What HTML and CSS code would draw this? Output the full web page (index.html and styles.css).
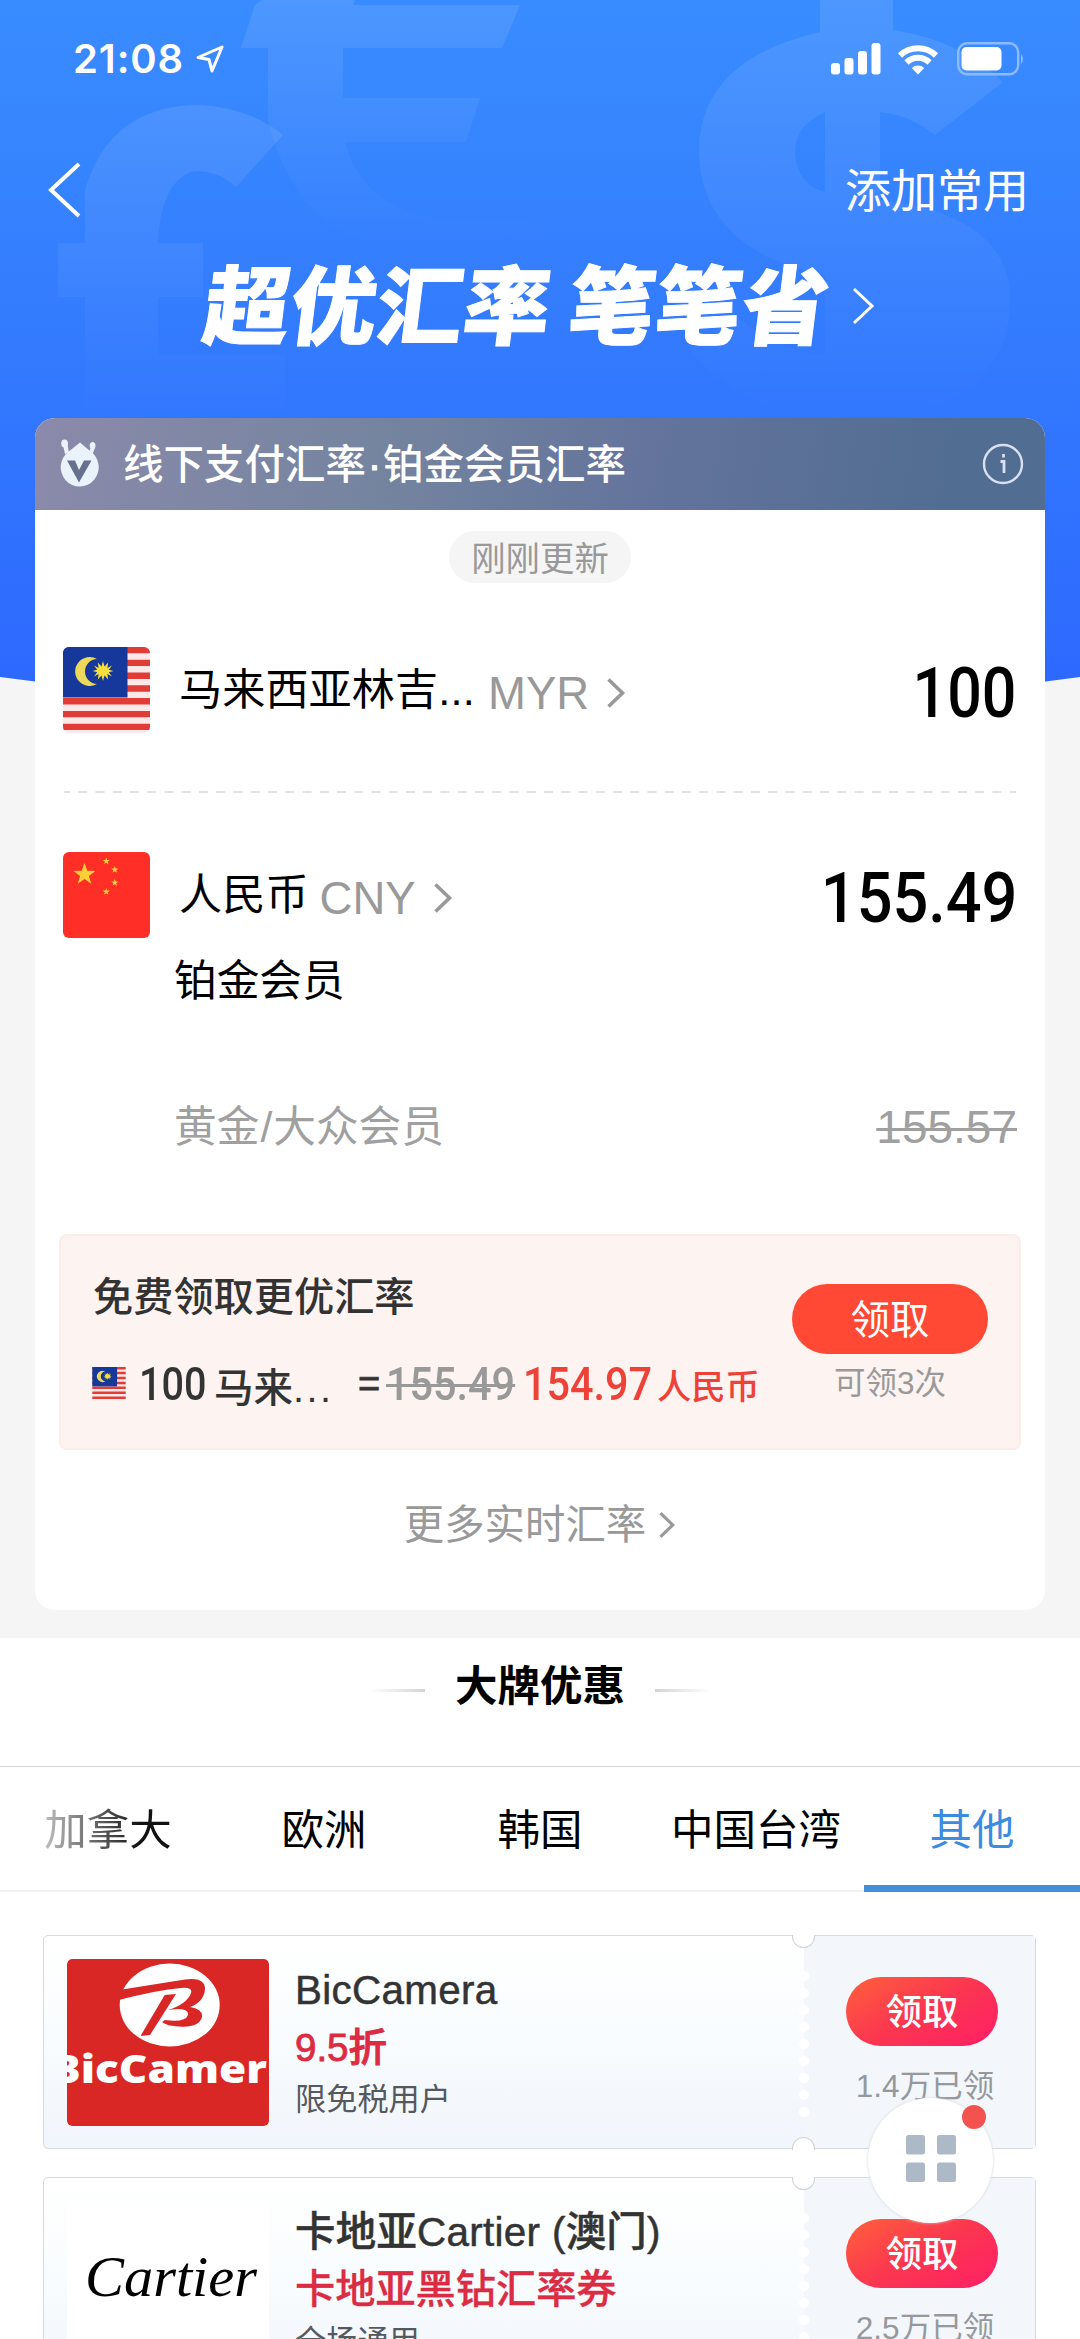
FILE: index.html
```html
<!DOCTYPE html>
<html lang="zh-CN">
<head>
<meta charset="utf-8">
<title>汇率</title>
<link rel="stylesheet" href="styles.css">
</head>
<body>
<svg width="0" height="0" class="defs" aria-hidden="true">
  <defs>
    <symbol id="flag-my" viewBox="0 0 87 86">
      <rect width="87" height="86" fill="#fbe9ea"/>
      <path d="M0 3.1H87M0 15.9H87M0 28.7H87M0 41.5H87M0 54.3H87M0 67.1H87M0 79.9H87" stroke="#e23c36" stroke-width="6.4"/>
      <rect width="64.500" height="50.500" fill="#17389b"/>
      <path d="M34 12A14.500 14.500 0 1 0 34 37A12 12.500 0 1 1 34 12Z" fill="#ecd95c"/>
      <path d="M40 14l1.500 5.500 3.700-4-.8 5.400 4.600-2.400-3.200 4.300 4.700 1.200-4.700 1.200 3.200 4.300-4.600-2.400.8 5.400-3.700-4-1.500 5.500-1.500-5.500-3.700 4 .8-5.400-4.600 2.400 3.200-4.300-4.700-1.200 4.700-1.200-3.200-4.300 4.600 2.400-.8-5.400 3.700 4z" fill="#f6de3e"/>
    </symbol>
    <symbol id="star" viewBox="-10 -10 20 20">
      <path d="M0-10 2.400-3.200 9.500-3.100 3.800 1.200 5.900 8.100 0 4-5.900 8.100-3.800 1.200-9.500-3.100-2.400-3.200Z"/>
    </symbol>
    <symbol id="chev" viewBox="0 0 20 32"><path d="M2.500 2.500 16.500 16 2.500 29.500" fill="none" stroke="currentColor" stroke-width="3.600"/></symbol>
  </defs>
</svg>

<main class="page">
  <svg class="backdrop" viewBox="0 0 1080 690" aria-hidden="true">
    <defs>
      <linearGradient id="sky" x1="0" y1="0" x2="0" y2="1"><stop offset="0" stop-color="#398cff"/><stop offset=".55" stop-color="#3278fe"/><stop offset="1" stop-color="#2d67ff"/></linearGradient>
      <linearGradient id="fade" x1="0" y1="0" x2="0" y2="1"><stop offset="0" stop-color="#fff" stop-opacity=".1"/><stop offset="1" stop-color="#fff" stop-opacity="0"/></linearGradient>
    </defs>
    <path d="M0 0H1080V677Q540 750 0 677Z" fill="url(#sky)"/>
    <g fill="url(#fade)" fill-rule="evenodd">
      <path d="M262 0H355L353 5H520L502 48H343V98H480L466 142H345Q360 205 440 220L545 222V250H420Q300 250 268 120V48H241L255 5Z"/>
      <path d="M85 243V190Q110 105 200 105Q250 108 283 135L236 187Q215 168 190 172Q160 185 158 243H203V297H158V355H285V420H85V297H58V243Z"/>
      <path d="M820 0H893V30Q960 40 1003 82L935 135Q910 115 880 112V200Q1010 215 1010 300Q1010 400 880 420H820Q740 410 690 350L735 315Q775 350 825 355V275Q700 250 699 150Q700 60 820 32ZM825 112Q795 125 795 152Q797 185 825 192Z"/>
    </g>
  </svg>

  <header class="status">
    <span class="time">21:08</span>
    <svg class="loc" width="28" height="28" viewBox="0 0 28 28"><path d="M26 2 2 12.500 13 14.500 16 26Z" fill="none" stroke="#fff" stroke-width="3" stroke-linejoin="round"/></svg>
    <svg class="signal" width="50" height="32" viewBox="0 0 50 32" fill="#fff"><rect x="0" y="20" width="9" height="11.500" rx="3"/><rect x="13.500" y="15" width="9" height="16.500" rx="3"/><rect x="27" y="8" width="9" height="23.500" rx="3"/><rect x="40.500" y="0" width="9" height="31.500" rx="3"/></svg>
    <svg class="wifi" width="42" height="31" viewBox="0 0 42 31"><path d="M3 11.500a26 26 0 0 1 36 0M9.500 18.500a16.500 16.500 0 0 1 23 0" fill="none" stroke="#fff" stroke-width="6"/><path d="M21 30.500 14.800 24a9 9 0 0 1 12.400 0Z" fill="#fff"/></svg>
    <svg class="battery" width="68" height="34" viewBox="0 0 68 34"><rect x="1.200" y="1.200" width="60" height="31" rx="9" fill="none" stroke="#8cbcff" stroke-width="2.400"/><rect x="4.500" y="5" width="40" height="23.500" rx="5" fill="#fff"/><path d="M64 11.500q4 5.500 0 11z" fill="#8cbcff"/></svg>
  </header>

  <nav class="nav">
    <svg width="34" height="56" viewBox="0 0 34 56"><path d="M31 2 3 28 31 54" fill="none" stroke="#fff" stroke-width="4"/></svg>
    <span class="nav-action">添加常用</span>
  </nav>

  <h1 class="slogan"><span class="slogan-text">超优汇率<i class="gap"></i>笔笔省</span>
    <svg width="24" height="38" viewBox="0 0 24 38"><path d="M2 2 20 19 2 36" fill="none" stroke="#fff" stroke-width="3"/></svg>
  </h1>

  <section class="card">
    <header class="card-head">
      <svg class="vip" width="40" height="50" viewBox="0 0 40 50"><g fill="#eaf2fb"><path d="M20 3.500 30 12A19 19.300 0 1 1 9 12.300Z"/><ellipse cx="4.600" cy="4.500" rx="3.400" ry="4"/><ellipse cx="32.600" cy="6.500" rx="2.900" ry="3.600"/><path d="M3 6 7.500 5 9 14 5 15ZM31 8l4 1-2.500 6-4-1Z"/></g><path d="M7 21.500h8L19 31l5-9.500h7.500L19 43.500Z" fill="#66718f"/></svg>
      <span class="card-title">线下支付汇率<i class="dot">·</i>铂金会员汇率</span>
      <svg class="info" width="42" height="42" viewBox="0 0 42 42"><circle cx="21" cy="21" r="19" fill="none" stroke="#d8e0f2" stroke-width="2.400"/><path d="M18.500 18.500H22V30M21.500 11v3.500" fill="none" stroke="#d8e0f2" stroke-width="2.800"/></svg>
    </header>

    <div class="fresh">刚刚更新</div>

    <div class="currency">
      <svg class="flag" width="87" height="86"><use href="#flag-my"/></svg>
      <span class="name">马来西亚林吉<i class="ellipsis">...</i></span>
      <span class="code">MYR</span>
      <svg class="chev" width="20" height="32"><use href="#chev"/></svg>
      <span class="amount amount-int">100</span>
    </div>
    <svg class="dash" width="952" height="2"><path d="M0 1H952" stroke="#e2e2e2" stroke-width="2" stroke-dasharray="9 8.250" stroke-dashoffset="3"/></svg>
    <div class="currency">
      <svg class="flag" width="87" height="86" viewBox="0 0 87 86"><rect width="87" height="86" fill="#ff2f27"/><g fill="#ffcf3a"><use href="#star" x="10" y="11" width="23" height="23"/><use href="#star" x="39.500" y="5.500" width="7.500" height="7.500"/><use href="#star" x="48" y="14" width="7.500" height="7.500"/><use href="#star" x="48" y="27" width="7.500" height="7.500"/><use href="#star" x="39.500" y="36" width="7.500" height="7.500"/></g></svg>
      <span class="name">人民币</span>
      <span class="code cny">CNY</span>
      <svg class="chev" width="20" height="32"><use href="#chev"/></svg>
      <span class="amount">155.49</span>
    </div>
    <div class="tier">铂金会员</div>
    <div class="tier tier-basic"><span>黄金<i class="slash">/</i>大众会员</span><s>155.57</s></div>

    <div class="promo">
      <div class="promo-main">
        <div class="promo-title">免费领取更优汇率</div>
        <div class="promo-row">
          <svg class="mini" width="34" height="33"><use href="#flag-my"/></svg>
          <span class="num n100"><b>100</b></span>
          <span class="cur">马来<i>...</i></span>
          <span class="eq">=</span>
          <span class="num old"><b>155.49</b></span>
          <span class="num new"><b>154.97</b></span>
          <span class="unit">人民币</span>
        </div>
      </div>
      <div class="promo-side">
        <button class="get">领取</button>
        <span class="left">可领3次</span>
      </div>
    </div>

    <div class="more">更多实时汇率<svg width="18" height="28"><use href="#chev"/></svg></div>
  </section>

  <section class="deals">
    <h2 class="deals-title"><i class="rule"></i>大牌优惠<i class="rule rule-r"></i></h2>
    <div class="tabs">
      <span class="tab tab-fade">加拿大</span><span class="tab">欧洲</span><span class="tab">韩国</span><span class="tab">中国台湾</span><span class="tab tab-on">其他</span>
    </div>

    <article class="coupon">
      <i class="notch notch-t"></i><i class="notch notch-b"></i>
      <svg class="logo" width="202" height="167" viewBox="0 0 202 167"><rect width="202" height="167" rx="5" fill="#d92725"/><ellipse cx="102.700" cy="46" rx="50" ry="41.500" fill="#fff"/><path d="M52 31 118 20.500Q138 18 138 30Q137 43 123 48Q136 50 135 58Q132 69 112 67.500Q100 67 95 63L98 61Q118 64 121 56Q122 50 110 50L101 51Q120 45 124 34Q126 28 114 29Q90 31 52 41ZM97.700 36 109 35 83 76 73.500 77Z" fill="#d92725"/><text x="-16" y="124" class="bic" textLength="216" lengthAdjust="spacingAndGlyphs">BicCamer</text></svg>
      <div class="info-col">
        <div class="brand">BicCamera</div>
        <div class="offer o-sm">9.5折</div>
        <div class="note">限免税用户</div>
      </div>
      <div class="stub"><button class="grab">领取</button><span class="taken">1.4万已领</span></div>
    </article>

    <article class="coupon">
      <i class="notch notch-t"></i><i class="notch notch-b"></i>
      <svg class="logo" width="202" height="167" viewBox="0 0 202 167"><rect width="202" height="167" rx="5" fill="#fff"/><text x="18" y="95" class="cartier" textLength="172" lengthAdjust="spacingAndGlyphs">Cartier</text></svg>
      <div class="info-col">
        <div class="brand">卡地亚Cartier (澳门)</div>
        <div class="offer">卡地亚黑钻汇率券</div>
        <div class="note">全场通用</div>
      </div>
      <div class="stub"><button class="grab">领取</button><span class="taken">2.5万已领</span></div>
    </article>
  </section>

  <div class="float">
    <svg width="50" height="47" viewBox="0 0 50 47" fill="#adb9c7"><rect width="19" height="19.500" rx="2.500"/><rect x="31" width="19" height="19.500" rx="2.500"/><rect y="27.500" width="19" height="19.500" rx="2.500"/><rect x="31" y="27.500" width="19" height="19.500" rx="2.500"/></svg>
    <i class="badge"></i>
  </div>
</main>
</body>
</html>
```

FILE: styles.css
```css
* { box-sizing: border-box; }
html, body { margin: 0; }
body {
  width: 1080px; height: 2339px; overflow: hidden;
  font-family: "Liberation Sans", "Noto Sans CJK SC", sans-serif;
  background: #f5f5f5; color: #000;
}
i { font-style: normal; }
svg { display: block; flex: none; }
button { border: 0; padding: 0; font-family: inherit; color: #fff; }
.defs { position: absolute; }
.page { position: relative; height: 2339px; overflow: hidden; white-space: nowrap; }
.backdrop { position: absolute; left: 0; top: 0; width: 1080px; height: 690px; }
.status, .nav, .slogan, .card, .deals { position: relative; }

.status { height: 118px; padding-left: 73px; display: flex; align-items: center; color: #fff; }
.time { width: 123px; font: 600 40px/50px Inter, sans-serif; letter-spacing: .9px; }
.loc { margin-right: 607px; }
.signal { margin-right: 16px; }
.wifi { margin-right: 18px; }

.nav { height: 144px; padding: 0 51px 0 48px; display: flex; align-items: center; justify-content: space-between; color: #fff; }
.nav-action { padding-top: 2px; font-size: 46px; line-height: 60px; }

.slogan { margin: 0; height: 88px; padding-left: 205px; display: flex; align-items: center; gap: 24px; color: #fff; }
.slogan-text { width: 623px; font: 900 86px/88px "Noto Sans CJK SC", sans-serif; letter-spacing: .7px; -webkit-text-stroke: 1px #fff; transform: translateY(-5px) skewX(-7deg); }
.gap { display: inline-block; width: 18px; }

.card { margin: 68px 35px 0; height: 1192px; border-radius: 20px; overflow: hidden; background: #fff; }
.card-head { height: 92px; padding: 0 21px 0 25px; display: flex; align-items: center; color: #fff; background: linear-gradient(100deg, #8b8aab, #74849f 35%, #64749c 60%, #526d92 90%); }
.card-title { margin: 0 auto 0 23px; padding-top: 2px; font-size: 40.500px; font-weight: 500; line-height: 60px; }
.dot { display: inline-block; width: 17px; text-align: center; -webkit-text-stroke: 1px; }
.fresh { width: 182px; height: 52px; margin: 21px auto 64px; border-radius: 26px; background: #f5f5f5; color: #999; font-size: 34.400px; line-height: 56px; text-align: center; }

.currency { height: 86px; padding: 0 28px; display: flex; align-items: center; }
.flag { border-radius: 6px; overflow: hidden; }
.name { margin-left: 29px; font-size: 43.200px; line-height: 60px; padding-bottom: 1px; }
.ellipsis { letter-spacing: .3px; }
.code { margin-left: 13px; padding-top: 7px; color: #999; font-size: 45.500px; line-height: 60px; }
.cny { margin-left: 11px; }
.chev { margin: 5px 0 0 17px; color: #999; }
.amount { margin-left: auto; padding-top: 6px; font: 500 70px/80px Roboto, sans-serif; transform: scaleX(.9); transform-origin: right; }
.amount-int { transform: translateX(-1px) scaleX(.87); }
.dash { margin: 58px 29px 59px; }
.tier { height: 46px; margin: 20px 28px 0 139px; font-size: 42.700px; line-height: 46px; }
.tier-basic { margin-top: 100px; display: flex; justify-content: space-between; color: #a0a0a0; }
.tier-basic s { font-size: 46px; text-decoration-thickness: 3px; }
.slash { margin: 0 1px; }

.promo { height: 216px; margin: 84px 24px 0; padding: 0 31px 0 32px; display: flex; justify-content: space-between; border-radius: 8px; border: 2px solid #fdece8; background: #fdf3f1; color: #333; }
.promo-title { margin-top: 36px; font-size: 40.200px; font-weight: 500; line-height: 52px; }
.promo-row { height: 52px; margin-top: 34px; display: flex; align-items: center; }
.mini { margin: -2px 0 0 -1px; }
.num { display: flex; }
.num b { display: block; font: 500 46px/52px Roboto, sans-serif; transform: scaleX(.9); transform-origin: left; }
.n100 { width: 74px; margin-left: 13px; }
.n100 b { transform: scaleX(.86); }
.cur { width: 144px; margin-left: 1px; font-size: 39.500px; font-weight: 500; }
.cur i { letter-spacing: 2.500px; }
.eq { width: 28px; font-size: 38px; -webkit-text-stroke: .8px; }
.old { width: 137px; color: #999; }
.old b { text-decoration: line-through; text-decoration-thickness: 3px; }
.new { width: 134px; color: #ee4238; }
.unit { color: #ee4238; font-size: 34.300px; font-weight: 500; }
.promo-side { width: 196px; padding-top: 48px; display: flex; flex-direction: column; align-items: center; }
.get { width: 196px; height: 70px; border-radius: 35px; background: #ff4935; font-size: 39.500px; line-height: 72px; }
.left { margin-top: 9px; color: #999; font-size: 31.500px; line-height: 40px; }
.more { margin-top: 50px; height: 50px; display: flex; align-items: center; justify-content: center; gap: 12px; color: #999; font-size: 40.400px; line-height: 50px; }

.deals { margin-top: 28px; height: 720px; background: #fff; }
.deals-title { margin: 0; height: 129px; padding-bottom: 30px; display: flex; align-items: center; justify-content: center; gap: 30px; border-bottom: 1px solid #d2d5d6; font-size: 42.500px; font-weight: 700; line-height: 60px; }
.rule { width: 56px; height: 3px; margin-top: 7px; background: linear-gradient(90deg, #fff, #d4d4d4); }
.rule-r { background: linear-gradient(90deg, #d4d4d4, #fff); }
.tabs { height: 125px; display: grid; grid-template-columns: repeat(5, 216px); border-bottom: 2px solid #f2f2f2; }
.tab { height: 125px; font-size: 42.500px; line-height: 127px; text-align: center; }
.tab-fade { color: transparent; background: linear-gradient(90deg, #bbb 45px, #666 95px, #111 140px); background-clip: text; -webkit-background-clip: text; }
.tab-on { color: #3b8be0; border-bottom: 7px solid #418fd4; }

.coupon { position: relative; width: 993px; height: 214px; margin: 43px 0 0 43px; display: flex; border: 1.500px solid #d5dadd; border-radius: 5px; background: linear-gradient(#fff, #f8fcfe 50%, #f1f5fc); }
.coupon + .coupon { margin-top: 28px; }
.logo { margin: 23px 0 0 23px; border-radius: 5px; }
.bic { font: 800 38px "Open Sans", sans-serif; fill: #fff; }
.cartier { font: italic 400 56px "Liberation Serif", serif; fill: #000; }
.info-col { flex: 1; margin-left: 26px; color: #333; }
.brand { margin-top: 28px; font-size: 40.400px; font-weight: 500; line-height: 52px; letter-spacing: .3px; -webkit-text-stroke: .5px; }
.offer { margin-top: 5px; color: #dc2c43; font-size: 40.200px; font-weight: 500; line-height: 54px; -webkit-text-stroke: .3px; }
.o-sm { font-size: 38.500px; -webkit-text-stroke: .9px; }
.note { margin-top: 2px; color: #54595e; font-size: 31.200px; line-height: 46px; }
.stub { position: relative; width: 231px; display: flex; flex-direction: column; align-items: center; padding: 41px 0 0 5px; background: #f3f7fb; }
.stub::before { content: ""; position: absolute; left: -5px; top: 32px; width: 10px; height: 150px; background: radial-gradient(circle at 5px 8px, #fff 4.500px, transparent 5.500px) 0 0 / 10px 17px; }
.grab { width: 152px; height: 69px; border-radius: 35px; background: linear-gradient(150deg, #ff5c3d 5%, #fb3650 50%, #ff1f66); font-size: 36.500px; font-weight: 500; line-height: 71px; }
.taken { margin: 20px 0 0 6px; color: #96999c; font-size: 31.500px; line-height: 40px; }
.notch { position: absolute; z-index: 1; left: 748px; width: 23px; height: 13px; border: 1.500px solid #d0d4d7; background: #fff; }
.notch-t { top: -1.500px; border-top: 0; border-radius: 0 0 12px 12px; }
.notch-b { bottom: -1.500px; border-bottom: 0; border-radius: 12px 12px 0 0; }

.float { position: absolute; left: 868px; top: 2098px; width: 125px; height: 125px; border-radius: 50%; background: #fff; box-shadow: 0 0 3px #cfd5da; display: flex; align-items: center; justify-content: center; }
.float svg { margin-top: -5px; }
.badge { position: absolute; left: 94px; top: 7px; width: 24px; height: 24px; border-radius: 50%; background: #f4524f; }
```
